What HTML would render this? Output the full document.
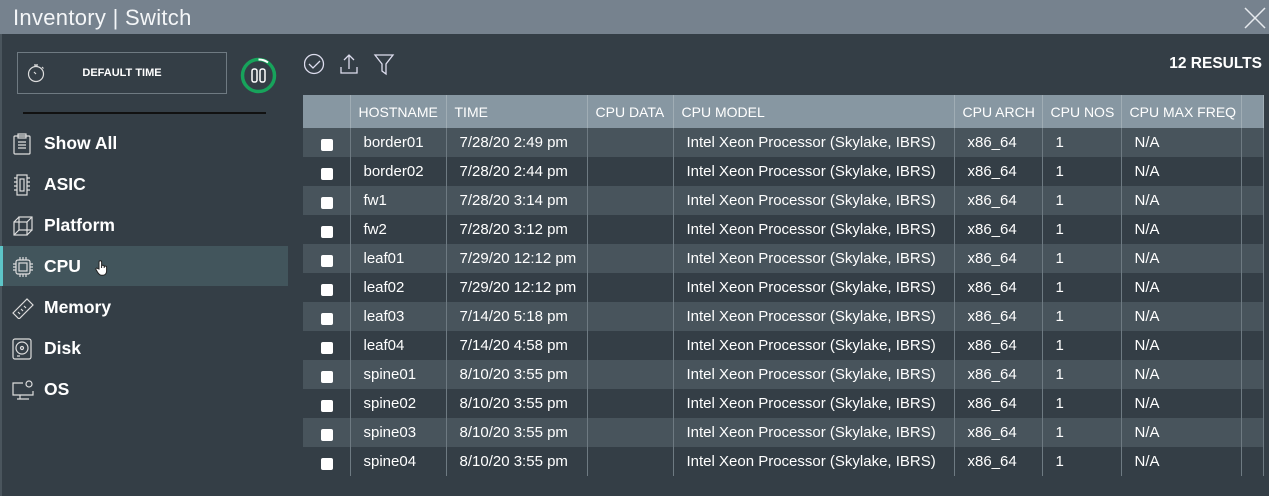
<!DOCTYPE html>
<html><head><meta charset="utf-8"><style>
*{margin:0;padding:0;box-sizing:border-box}
body{width:1269px;height:496px;overflow:hidden;background:#343e46;font-family:"Liberation Sans",sans-serif;color:#fff;position:relative}
.title{position:absolute;left:0;top:0;width:1269px;height:34px;background:#76828e;font-size:22px;padding:5px 0 0 13px;color:#f4f6f8;letter-spacing:0.3px}
.side{position:absolute;left:0;top:34px;width:290px;height:462px;box-shadow:inset 2px 0 0 #4a555d}
.dt{position:absolute;left:17px;top:18px;width:210px;height:42px;border:1px solid #6f7a82;font-size:11px;font-weight:bold;text-align:center;line-height:40px}
.ring{position:absolute;left:240px;top:23px}
.hr{position:absolute;left:23px;top:78px;width:243px;height:2px;background:#111}
.item{position:absolute;left:0;width:288px;height:40px;font-size:17.5px;font-weight:bold;line-height:40px;padding-left:44px}
.item svg{position:absolute;left:12px;top:10px}
.sel{background:#42555c;border-left:3px solid #5dc5c8;padding-left:41px}
.sel svg.i{left:9px}
.tbl{position:absolute;left:303px;top:95px;width:961px;border-collapse:collapse;font-size:15px}
.tbl th{background:#8797a2;height:33px;font-weight:normal;text-align:left;padding-left:8px;font-size:14px;border-right:1px solid #a0adb5}
.tbl td{height:29px;padding-left:13px;border-right:1px solid #6e7a82}
.tbl tr:nth-child(even) td{background:#48545c}
.cb{width:12px;height:12px;background:#fff;border-radius:2px;margin-left:5px;margin-top:4px}
.res{position:absolute;right:7px;top:55px;font-size:15.5px;font-weight:bold}
</style></head><body>
<div class="title">Inventory | Switch</div>
<svg style="position:absolute;left:1244px;top:7px" width="22" height="22"><path d="M1 1L21 21M21 1L1 21" stroke="#e6eaee" stroke-width="1.5"/></svg>
<div class="side">
<div class="dt">DEFAULT TIME
<svg style="position:absolute;left:8px;top:10px" width="20" height="20" fill="none" stroke="#ddd" stroke-width="1.2"><circle cx="10" cy="11" r="7.5"/><path d="M8 2h4M10 2v2M16 4l1.5 1.5M10 11l-2-2"/></svg></div>
<svg class="ring" width="37" height="37"><circle cx="18.5" cy="18.5" r="16" fill="none" stroke="#17a35b" stroke-width="3.5"/><path d="M18.5 2.5A16 16 0 0 1 28 5.5" stroke="#fff" stroke-width="2" fill="none"/><rect x="12" y="12" width="5" height="13" rx="2" fill="none" stroke="#fff" stroke-width="1.5"/><rect x="20" y="12" width="5" height="13" rx="2" fill="none" stroke="#fff" stroke-width="1.5"/></svg>
<div class="hr"></div>
<div class="item" style="top:89px"><svg width="20" height="22" fill="none" stroke="#ddd" stroke-width="1.2"><rect x="2" y="3" width="16" height="18" rx="1"/><rect x="6" y="1" width="8" height="4"/><path d="M6 9h8M6 12h8M6 15h8"/></svg>Show All</div>
<div class="item" style="top:130px"><svg width="20" height="22" fill="none" stroke="#ddd" stroke-width="1.2"><rect x="5" y="1" width="10" height="20"/><rect x="8" y="5" width="4" height="12"/><path d="M2 4h3M2 8h3M2 12h3M2 16h3M15 4h3M15 8h3M15 12h3M15 16h3"/></svg>ASIC</div>
<div class="item" style="top:171px"><svg width="22" height="22" fill="none" stroke="#ddd" stroke-width="1.2"><rect x="2" y="7" width="13" height="13"/><rect x="7" y="2" width="13" height="13"/><path d="M2 7l5-5M15 7l5-5M2 20l5-5M15 20l5-5"/></svg>Platform</div>
<div class="item sel" style="top:212px"><svg class="i" width="22" height="22" fill="none" stroke="#ddd" stroke-width="1.2"><rect x="4" y="4" width="14" height="14" rx="2"/><rect x="7" y="7" width="8" height="8"/><path d="M8 1v3M11 1v3M14 1v3M8 18v3M11 18v3M14 18v3M1 8h3M1 11h3M1 14h3M18 8h3M18 11h3M18 14h3"/></svg>CPU<svg style="left:92px;top:14px" width="14" height="16"><path d="M4 9V2a1.3 1.3 0 0 1 2.6 0v6V6.5a1.3 1.3 0 0 1 2.6 0V8V7.3a1.2 1.2 0 0 1 2.4 0v4c0 2-1.5 4-4 4h-1c-2 0-3-1.5-4-3L1 9.5c-.5-1 .8-2 1.6-1z" fill="#fff" stroke="#222" stroke-width="1"/></svg></div>
<div class="item" style="top:253px"><svg width="22" height="22" fill="none" stroke="#ddd" stroke-width="1.2"><path d="M1 16L15 2l6 6L7 22z"/><path d="M6 15l2 2M9 12l2 2M12 9l2 2"/></svg>Memory</div>
<div class="item" style="top:294px"><svg width="20" height="22" fill="none" stroke="#ddd" stroke-width="1.2"><rect x="1" y="1" width="18" height="20" rx="2"/><circle cx="10" cy="10" r="6"/><circle cx="10" cy="10" r="1.5"/><path d="M5 18h3"/></svg>Disk</div>
<div class="item" style="top:335px"><svg width="22" height="22" fill="none" stroke="#ddd" stroke-width="1.2"><path d="M11 4H1v12h20v-4M8 16v4M5 20h12"/><circle cx="17" cy="5" r="3"/></svg>OS</div>
</div>
<svg style="position:absolute;left:304px;top:53px" width="100" height="24" fill="none" stroke="#dde" stroke-width="1.3"><circle cx="10" cy="11" r="9.5"/><path d="M5 11l4 4 7-7"/><path d="M45 2v14M40 7l5-5 5 5M37 14v6h16v-6"/><path d="M71 2h18l-7 9v10l-4-3v-7z"/></svg>
<div class="res">12 RESULTS</div>
<table class="tbl">
<tr><th style="width:47px"></th><th style="width:96px">HOSTNAME</th><th style="width:141px">TIME</th><th style="width:86px">CPU DATA</th><th style="width:281px">CPU MODEL</th><th style="width:88px">CPU ARCH</th><th style="width:79px">CPU NOS</th><th style="width:120px">CPU MAX FREQ</th><th></th></tr>
<tr><td><div class="cb"></div></td><td>border01</td><td>7/28/20 2:49 pm</td><td></td><td>Intel Xeon Processor (Skylake, IBRS)</td><td>x86_64</td><td>1</td><td>N/A</td><td></td></tr>
<tr><td><div class="cb"></div></td><td>border02</td><td>7/28/20 2:44 pm</td><td></td><td>Intel Xeon Processor (Skylake, IBRS)</td><td>x86_64</td><td>1</td><td>N/A</td><td></td></tr>
<tr><td><div class="cb"></div></td><td>fw1</td><td>7/28/20 3:14 pm</td><td></td><td>Intel Xeon Processor (Skylake, IBRS)</td><td>x86_64</td><td>1</td><td>N/A</td><td></td></tr>
<tr><td><div class="cb"></div></td><td>fw2</td><td>7/28/20 3:12 pm</td><td></td><td>Intel Xeon Processor (Skylake, IBRS)</td><td>x86_64</td><td>1</td><td>N/A</td><td></td></tr>
<tr><td><div class="cb"></div></td><td>leaf01</td><td>7/29/20 12:12 pm</td><td></td><td>Intel Xeon Processor (Skylake, IBRS)</td><td>x86_64</td><td>1</td><td>N/A</td><td></td></tr>
<tr><td><div class="cb"></div></td><td>leaf02</td><td>7/29/20 12:12 pm</td><td></td><td>Intel Xeon Processor (Skylake, IBRS)</td><td>x86_64</td><td>1</td><td>N/A</td><td></td></tr>
<tr><td><div class="cb"></div></td><td>leaf03</td><td>7/14/20 5:18 pm</td><td></td><td>Intel Xeon Processor (Skylake, IBRS)</td><td>x86_64</td><td>1</td><td>N/A</td><td></td></tr>
<tr><td><div class="cb"></div></td><td>leaf04</td><td>7/14/20 4:58 pm</td><td></td><td>Intel Xeon Processor (Skylake, IBRS)</td><td>x86_64</td><td>1</td><td>N/A</td><td></td></tr>
<tr><td><div class="cb"></div></td><td>spine01</td><td>8/10/20 3:55 pm</td><td></td><td>Intel Xeon Processor (Skylake, IBRS)</td><td>x86_64</td><td>1</td><td>N/A</td><td></td></tr>
<tr><td><div class="cb"></div></td><td>spine02</td><td>8/10/20 3:55 pm</td><td></td><td>Intel Xeon Processor (Skylake, IBRS)</td><td>x86_64</td><td>1</td><td>N/A</td><td></td></tr>
<tr><td><div class="cb"></div></td><td>spine03</td><td>8/10/20 3:55 pm</td><td></td><td>Intel Xeon Processor (Skylake, IBRS)</td><td>x86_64</td><td>1</td><td>N/A</td><td></td></tr>
<tr><td><div class="cb"></div></td><td>spine04</td><td>8/10/20 3:55 pm</td><td></td><td>Intel Xeon Processor (Skylake, IBRS)</td><td>x86_64</td><td>1</td><td>N/A</td><td></td></tr>
</table>
</body></html>
